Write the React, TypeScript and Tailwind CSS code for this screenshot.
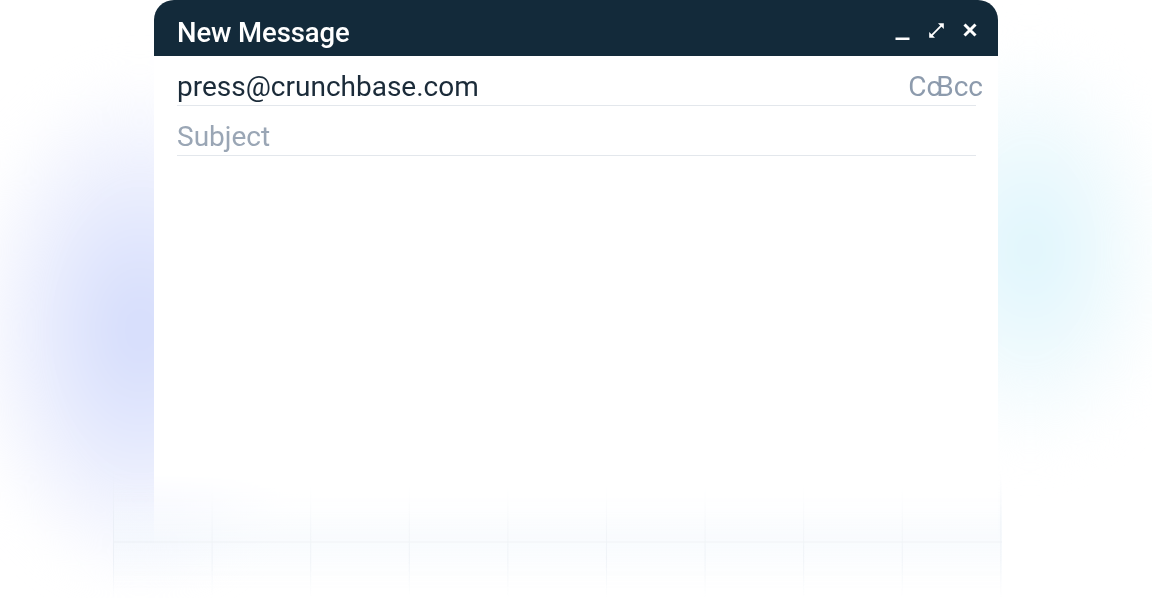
export default function App() {
  return (
    <div className="relative w-full h-[598px] overflow-hidden bg-white font-['Roboto',sans-serif]">
      {/* background glows */}
      <div className="absolute left-[-40px] top-[70px] w-[360px] h-[520px] rounded-full blur-[20px] bg-[radial-gradient(closest-side,#d3dbfb_0%,#e3e8fd_40%,#f2f4fe_70%,rgba(255,255,255,0)_100%)]" />
      <div className="absolute left-[880px] top-[40px] w-[300px] h-[420px] rounded-full blur-[20px] bg-[radial-gradient(closest-side,#def5fc_0%,#ebf9fd_40%,#f6fcfe_70%,rgba(255,255,255,0)_100%)]" />

      {/* faint grid at the bottom */}
      <div className="absolute left-[113px] right-[150px] top-[470px] h-[128px] opacity-60 blur-[0.5px] bg-[linear-gradient(to_right,#e6ecf3_1px,transparent_1px),linear-gradient(to_bottom,transparent_71px,#edf2f7_71px,#edf2f7_73px,transparent_73px),linear-gradient(to_bottom,rgba(242,247,252,0)_0%,#f3f8fd_50%,rgba(242,247,252,0)_100%)] bg-[size:98.6px_100%,100%_100%,100%_100%] [mask-image:linear-gradient(to_bottom,transparent_0%,black_40%,black_70%,transparent_100%)]" />

      {/* compose window */}
      <div className="relative mx-auto w-[844px] h-[598px] [mask-image:linear-gradient(to_bottom,black_0%,black_79%,transparent_92%)]">
        <div className="flex h-[56px] items-center justify-between rounded-t-[20px] bg-[#132a3a] pl-[23px] pr-[21px]">
          <h1 className="pt-[10px] text-[27.5px] font-medium leading-none tracking-[-0.1px] text-white">
            New Message
          </h1>
          <div className="flex items-center gap-[18px] pt-[4px]">
            <svg width="15" height="16" viewBox="0 0 15 16" className="mt-[6px]">
              <rect x="0.5" y="12.5" width="14" height="2.5" fill="white" />
            </svg>
            <svg width="17" height="17" viewBox="0 0 17 17">
              <path d="M3.2 13.8 L13.8 3.2" stroke="white" strokeWidth="1.8" />
              <path d="M10 1.2 L15.8 1.2 L15.8 7 Z" fill="white" />
              <path d="M1.2 10 L1.2 15.8 L7 15.8 Z" fill="white" />
            </svg>
            <svg width="14" height="14" viewBox="0 0 14 14">
              <path d="M1.5 1.5 L12.5 12.5 M12.5 1.5 L1.5 12.5" stroke="white" strokeWidth="3" />
            </svg>
          </div>
        </div>

        <div className="h-full bg-white pl-[23px] pr-[22px]">
          <div className="flex h-[50px] items-end justify-between border-b border-[#e3e7ec] pb-[4px]">
            <span className="text-[28px] leading-none text-[#1b2b39]">press@crunchbase.com</span>
            <span className="-mr-[7px] text-[28px] leading-none text-[#8d9bad]">
              C<span className="tracking-[-5px]">c</span>Bcc
            </span>
          </div>
          <div className="flex h-[50px] items-end border-b border-[#e3e7ec] pb-[4px]">
            <span className="text-[28px] leading-none text-[#9aa6b5]">Subject</span>
          </div>
        </div>
      </div>
    </div>
  );
}
